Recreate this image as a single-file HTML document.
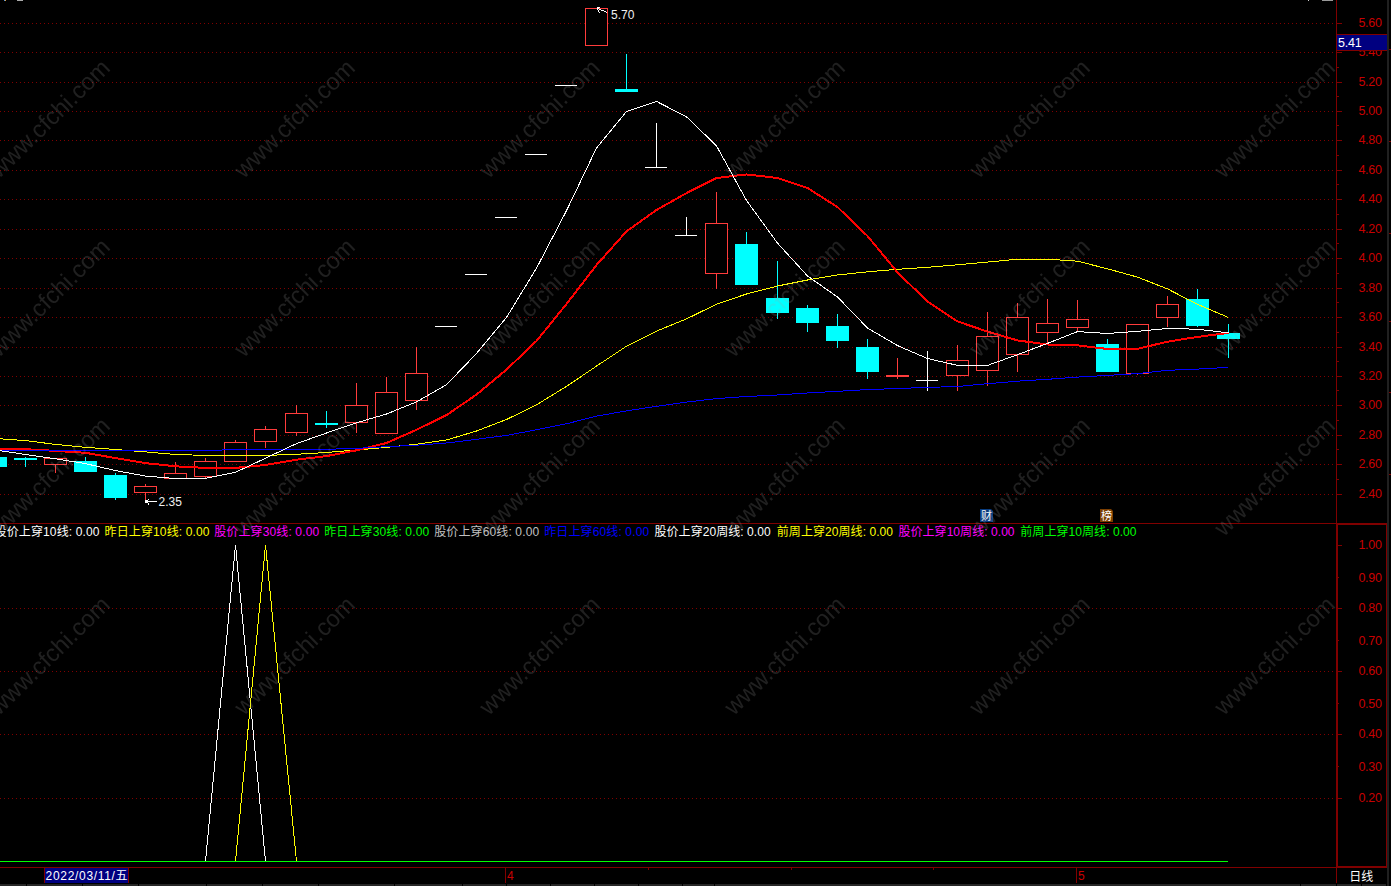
<!DOCTYPE html>
<html lang="zh-CN">
<head>
<meta charset="utf-8">
<title>K线图</title>
<style>
html,body{margin:0;padding:0;background:#000;overflow:hidden;}
#c{position:relative;width:1391px;height:886px;background:#000;overflow:hidden;
font-family:"Liberation Sans","Noto Sans CJK SC",sans-serif;font-size:12px;}
#c svg{position:absolute;left:0;top:0;}
.t{position:absolute;white-space:nowrap;line-height:14px;font-size:12px;}
.bd{position:absolute;top:509px;width:13px;height:13px;color:#fff;font-size:11px;line-height:15.5px;text-align:center;clip-path:polygon(0 0,11px 0,13px 2px,13px 13px,0 13px);}
#wm{pointer-events:none;will-change:transform;}
</style>
</head>
<body>
<div id="c">
<svg width="1391" height="886" viewBox="0 0 1391 886" shape-rendering="crispEdges">
<line x1="0" y1="23.5" x2="1333" y2="23.5" stroke="#800000" stroke-width="1" stroke-dasharray="1 3"/>
<line x1="0" y1="52.5" x2="1333" y2="52.5" stroke="#800000" stroke-width="1" stroke-dasharray="1 3"/>
<line x1="0" y1="82.5" x2="1333" y2="82.5" stroke="#800000" stroke-width="1" stroke-dasharray="1 3"/>
<line x1="0" y1="111.5" x2="1333" y2="111.5" stroke="#800000" stroke-width="1" stroke-dasharray="1 3"/>
<line x1="0" y1="140.5" x2="1333" y2="140.5" stroke="#800000" stroke-width="1" stroke-dasharray="1 3"/>
<line x1="0" y1="170.5" x2="1333" y2="170.5" stroke="#800000" stroke-width="1" stroke-dasharray="1 3"/>
<line x1="0" y1="199.5" x2="1333" y2="199.5" stroke="#800000" stroke-width="1" stroke-dasharray="1 3"/>
<line x1="0" y1="229.5" x2="1333" y2="229.5" stroke="#800000" stroke-width="1" stroke-dasharray="1 3"/>
<line x1="0" y1="258.5" x2="1333" y2="258.5" stroke="#800000" stroke-width="1" stroke-dasharray="1 3"/>
<line x1="0" y1="288.5" x2="1333" y2="288.5" stroke="#800000" stroke-width="1" stroke-dasharray="1 3"/>
<line x1="0" y1="317.5" x2="1333" y2="317.5" stroke="#800000" stroke-width="1" stroke-dasharray="1 3"/>
<line x1="0" y1="347.5" x2="1333" y2="347.5" stroke="#800000" stroke-width="1" stroke-dasharray="1 3"/>
<line x1="0" y1="376.5" x2="1333" y2="376.5" stroke="#800000" stroke-width="1" stroke-dasharray="1 3"/>
<line x1="0" y1="405.5" x2="1333" y2="405.5" stroke="#800000" stroke-width="1" stroke-dasharray="1 3"/>
<line x1="0" y1="435.5" x2="1333" y2="435.5" stroke="#800000" stroke-width="1" stroke-dasharray="1 3"/>
<line x1="0" y1="464.5" x2="1333" y2="464.5" stroke="#800000" stroke-width="1" stroke-dasharray="1 3"/>
<line x1="0" y1="494.5" x2="1333" y2="494.5" stroke="#800000" stroke-width="1" stroke-dasharray="1 3"/>
<line x1="0" y1="608.5" x2="1333" y2="608.5" stroke="#800000" stroke-width="1" stroke-dasharray="1 3"/>
<line x1="0" y1="671.5" x2="1333" y2="671.5" stroke="#800000" stroke-width="1" stroke-dasharray="1 3"/>
<line x1="0" y1="734.5" x2="1333" y2="734.5" stroke="#800000" stroke-width="1" stroke-dasharray="1 3"/>
<line x1="0" y1="798.5" x2="1333" y2="798.5" stroke="#800000" stroke-width="1" stroke-dasharray="1 3"/>

<rect x="-5" y="457" width="1" height="10" fill="#00ffff"/>
<rect x="-16" y="457" width="23" height="10" fill="#00ffff"/>
<rect x="25" y="457" width="1" height="10" fill="#00ffff"/>
<rect x="14" y="458" width="23" height="2" fill="#00ffff"/>
<rect x="55" y="464" width="1" height="9" fill="#ff3c3c"/>
<rect x="44.5" y="458.5" width="22" height="6" fill="#000" stroke="#ff3c3c" stroke-width="1"/>
<rect x="85" y="457" width="1" height="15" fill="#00ffff"/>
<rect x="74" y="461" width="23" height="11" fill="#00ffff"/>
<rect x="115" y="473" width="1" height="27" fill="#00ffff"/>
<rect x="104" y="475" width="23" height="23" fill="#00ffff"/>
<rect x="145" y="484" width="1" height="3" fill="#ff3c3c"/>
<rect x="145" y="492" width="1" height="8" fill="#ff3c3c"/>
<rect x="134.5" y="486.5" width="22" height="6" fill="#000" stroke="#ff3c3c" stroke-width="1"/>
<rect x="175" y="462" width="1" height="12" fill="#ff3c3c"/>
<rect x="164.5" y="473.5" width="22" height="5" fill="#000" stroke="#ff3c3c" stroke-width="1"/>
<rect x="205" y="458" width="1" height="4" fill="#ff3c3c"/>
<rect x="205" y="476" width="1" height="3" fill="#ff3c3c"/>
<rect x="194.5" y="461.5" width="22" height="15" fill="#000" stroke="#ff3c3c" stroke-width="1"/>
<rect x="235" y="440" width="1" height="3" fill="#ff3c3c"/>
<rect x="224.5" y="442.5" width="22" height="19" fill="#000" stroke="#ff3c3c" stroke-width="1"/>
<rect x="265" y="426" width="1" height="4" fill="#ff3c3c"/>
<rect x="265" y="441" width="1" height="7" fill="#ff3c3c"/>
<rect x="254.5" y="429.5" width="22" height="12" fill="#000" stroke="#ff3c3c" stroke-width="1"/>
<rect x="296" y="405" width="1" height="9" fill="#ff3c3c"/>
<rect x="296" y="432" width="1" height="4" fill="#ff3c3c"/>
<rect x="285.5" y="413.5" width="22" height="19" fill="#000" stroke="#ff3c3c" stroke-width="1"/>
<rect x="326" y="411" width="1" height="17" fill="#00ffff"/>
<rect x="315" y="423" width="23" height="2" fill="#00ffff"/>
<rect x="356" y="383" width="1" height="23" fill="#ff3c3c"/>
<rect x="356" y="422" width="1" height="11" fill="#ff3c3c"/>
<rect x="345.5" y="405.5" width="22" height="17" fill="#000" stroke="#ff3c3c" stroke-width="1"/>
<rect x="386" y="377" width="1" height="16" fill="#ff3c3c"/>
<rect x="375.5" y="392.5" width="22" height="41" fill="#000" stroke="#ff3c3c" stroke-width="1"/>
<rect x="416" y="347" width="1" height="27" fill="#ff3c3c"/>
<rect x="416" y="400" width="1" height="10" fill="#ff3c3c"/>
<rect x="405.5" y="373.5" width="22" height="27" fill="#000" stroke="#ff3c3c" stroke-width="1"/>
<rect x="435" y="326" width="22" height="1" fill="#ffffff"/>
<rect x="465" y="274" width="22" height="1" fill="#ffffff"/>
<rect x="495" y="217" width="22" height="1" fill="#ffffff"/>
<rect x="525" y="154" width="22" height="1" fill="#ffffff"/>
<rect x="555" y="85" width="22" height="1" fill="#ffffff"/>
<rect x="585.5" y="8.5" width="22" height="37" fill="#000" stroke="#ff3c3c" stroke-width="1"/>
<rect x="626" y="54" width="1" height="38" fill="#00ffff"/>
<rect x="615" y="89" width="23" height="3" fill="#00ffff"/>
<rect x="656" y="123" width="1" height="45" fill="#ffffff"/>
<rect x="645" y="167" width="22" height="1" fill="#ffffff"/>
<rect x="686" y="217" width="1" height="19" fill="#ffffff"/>
<rect x="675" y="235" width="22" height="1" fill="#ffffff"/>
<rect x="716" y="192" width="1" height="32" fill="#ff3c3c"/>
<rect x="716" y="273" width="1" height="16" fill="#ff3c3c"/>
<rect x="705.5" y="223.5" width="22" height="50" fill="#000" stroke="#ff3c3c" stroke-width="1"/>
<rect x="746" y="232" width="1" height="53" fill="#00ffff"/>
<rect x="735" y="244" width="23" height="41" fill="#00ffff"/>
<rect x="777" y="261" width="1" height="58" fill="#00ffff"/>
<rect x="766" y="298" width="23" height="15" fill="#00ffff"/>
<rect x="807" y="305" width="1" height="27" fill="#00ffff"/>
<rect x="796" y="308" width="23" height="15" fill="#00ffff"/>
<rect x="837" y="314" width="1" height="34" fill="#00ffff"/>
<rect x="826" y="326" width="23" height="15" fill="#00ffff"/>
<rect x="867" y="339" width="1" height="40" fill="#00ffff"/>
<rect x="856" y="347" width="23" height="25" fill="#00ffff"/>
<rect x="897" y="358" width="1" height="21" fill="#ff3c3c"/>
<rect x="886" y="375" width="23" height="2" fill="#ff3c3c"/>
<rect x="927" y="351" width="1" height="40" fill="#ffffff"/>
<rect x="916" y="380" width="22" height="1" fill="#ffffff"/>
<rect x="957" y="345" width="1" height="16" fill="#ff3c3c"/>
<rect x="957" y="375" width="1" height="16" fill="#ff3c3c"/>
<rect x="946.5" y="360.5" width="22" height="15" fill="#000" stroke="#ff3c3c" stroke-width="1"/>
<rect x="987" y="312" width="1" height="25" fill="#ff3c3c"/>
<rect x="987" y="370" width="1" height="16" fill="#ff3c3c"/>
<rect x="976.5" y="336.5" width="22" height="34" fill="#000" stroke="#ff3c3c" stroke-width="1"/>
<rect x="1017" y="303" width="1" height="15" fill="#ff3c3c"/>
<rect x="1017" y="354" width="1" height="18" fill="#ff3c3c"/>
<rect x="1006.5" y="317.5" width="22" height="37" fill="#000" stroke="#ff3c3c" stroke-width="1"/>
<rect x="1047" y="299" width="1" height="25" fill="#ff3c3c"/>
<rect x="1047" y="332" width="1" height="12" fill="#ff3c3c"/>
<rect x="1036.5" y="323.5" width="22" height="9" fill="#000" stroke="#ff3c3c" stroke-width="1"/>
<rect x="1077" y="300" width="1" height="20" fill="#ff3c3c"/>
<rect x="1077" y="327" width="1" height="5" fill="#ff3c3c"/>
<rect x="1066.5" y="319.5" width="22" height="8" fill="#000" stroke="#ff3c3c" stroke-width="1"/>
<rect x="1107" y="339" width="1" height="33" fill="#00ffff"/>
<rect x="1096" y="344" width="23" height="28" fill="#00ffff"/>
<rect x="1137" y="373" width="1" height="2" fill="#ff3c3c"/>
<rect x="1126.5" y="324.5" width="22" height="49" fill="#000" stroke="#ff3c3c" stroke-width="1"/>
<rect x="1167" y="296" width="1" height="9" fill="#ff3c3c"/>
<rect x="1167" y="317" width="1" height="10" fill="#ff3c3c"/>
<rect x="1156.5" y="304.5" width="22" height="13" fill="#000" stroke="#ff3c3c" stroke-width="1"/>
<rect x="1197" y="289" width="1" height="38" fill="#00ffff"/>
<rect x="1186" y="299" width="23" height="27" fill="#00ffff"/>
<rect x="1228" y="324" width="1" height="34" fill="#00ffff"/>
<rect x="1217" y="333" width="23" height="6" fill="#00ffff"/>
<polyline points="-4.5,438.5 25.5,440.6 55.5,444.4 85.5,447.3 115.5,449.5 145.5,451.9 175.5,454.5 205.5,455.4 235.5,455.4 265.5,455.4 296.5,454.3 326.5,452.5 356.5,450 386.5,447.4 416.5,444.2 446.5,440 476.5,431 506.5,419.5 536.5,404.8 566.5,386.4 596.5,366.1 626.5,346.2 656.5,331.1 686.5,318.9 716.5,304.2 746.5,294 777.5,286 807.5,280 837.5,275 867.5,271.8 897.5,269.3 927.5,267.3 957.5,264.8 987.5,262.1 1017.5,259.2 1047.5,259.2 1077.5,261.2 1107.5,268.8 1137.5,277.1 1167.5,288.9 1197.5,304.3 1228.5,317.5" fill="none" stroke="#ffff00" stroke-width="1" stroke-linejoin="round"/>
<polyline points="-4.5,449 25.5,449.2 55.5,450.9 85.5,452.8 115.5,458.1 145.5,463.1 175.5,466.3 205.5,467.9 235.5,467.9 265.5,465 296.5,459.7 326.5,456.1 356.5,450.3 386.5,443 416.5,429.8 446.5,415.1 476.5,394.6 506.5,369.6 536.5,341 566.5,304 596.5,265 626.5,231.4 656.5,210 686.5,193.1 716.5,178 746.5,174.4 777.5,178 807.5,188 837.5,207.1 867.5,236 897.5,272.4 927.5,301.5 957.5,321.4 987.5,331.6 1017.5,340.4 1047.5,344.5 1077.5,345.3 1107.5,349 1137.5,348.8 1167.5,341.7 1197.5,336.9 1228.5,332.9" fill="none" stroke="#ff0000" stroke-width="2" stroke-linejoin="round"/>
<polyline points="-4.5,450.5 25.5,450.5 55.5,450.5 85.5,450.5 115.5,450.5 145.5,450.5 175.5,450.5 205.5,450.5 235.5,449.6 265.5,449.6 296.5,449.5 326.5,449.3 356.5,448.4 386.5,446.7 416.5,445.2 446.5,443 476.5,439.3 506.5,435.4 536.5,429.8 566.5,423.8 596.5,416.1 626.5,410.9 656.5,406.3 686.5,402.1 716.5,398.6 746.5,396.5 777.5,395 807.5,393 837.5,391.3 867.5,389.6 897.5,388.5 927.5,387.4 957.5,386.5 987.5,383.7 1017.5,381.2 1047.5,379.3 1077.5,377.1 1107.5,375.4 1137.5,373.6 1167.5,370.3 1197.5,369.1 1228.5,367.4" fill="none" stroke="#0000ff" stroke-width="1" stroke-linejoin="round"/>
<polyline points="-4.5,450 25.5,454.5 55.5,458.8 85.5,463.6 115.5,470.6 145.5,476.1 175.5,478.5 205.5,478.4 235.5,472.3 265.5,458.2 296.5,443.6 326.5,433 356.5,422.8 386.5,414 416.5,401.9 446.5,384.7 476.5,353.5 506.5,317.4 536.5,268.2 566.5,210.7 596.5,148 626.5,111.5 656.5,101.4 686.5,116.8 716.5,145.8 746.5,200.5 777.5,243.1 807.5,276 837.5,297 867.5,328 897.5,345.6 927.5,358.5 957.5,365.4 987.5,365.4 1017.5,354.7 1047.5,343.4 1077.5,331.6 1107.5,333.5 1137.5,331.3 1167.5,328.5 1197.5,329.2 1228.5,332.9" fill="none" stroke="#ffffff" stroke-width="1" stroke-linejoin="round"/>
<polyline points="205.5,861.5 235.5,545 265.5,861.5" fill="none" stroke="#fff" stroke-width="1"/>
<polyline points="235.5,861.5 265.5,545 296.5,861.5" fill="none" stroke="#ff0" stroke-width="1"/>
<rect x="0" y="861" width="1228" height="1" fill="#00ff00"/>
<line x1="597.5" y1="8.5" x2="607.5" y2="12.5" stroke="#fff" stroke-width="1"/>
<rect x="597" y="7" width="3" height="1" fill="#fff"/>
<rect x="597" y="9" width="1" height="1" fill="#fff"/>
<rect x="598" y="10" width="1" height="1" fill="#fff"/>
<rect x="598" y="11" width="1" height="1" fill="#fff"/>
<rect x="599" y="12" width="1" height="1" fill="#fff"/>
<rect x="145" y="501" width="12" height="1" fill="#fff"/>
<rect x="145" y="500" width="2" height="3" fill="#fff"/>
<rect x="147" y="500" width="1" height="1" fill="#fff"/>
<rect x="148" y="499" width="1" height="1" fill="#fff"/>
<rect x="147" y="502" width="1" height="1" fill="#fff"/>
<rect x="148" y="503" width="1" height="1" fill="#fff"/>
<rect x="148" y="504" width="1" height="1" fill="#fff"/>
<rect x="1336" y="0" width="1" height="524" fill="#800000"/>
<rect x="0" y="523" width="1337" height="1" fill="#800000"/>
<rect x="1336" y="523" width="2" height="345" fill="#800000"/>
<rect x="1336" y="523" width="51" height="2" fill="#800000"/>
<rect x="1386" y="523" width="1" height="345" fill="#800000"/>
<rect x="1336" y="866" width="51" height="2" fill="#800000"/>
<rect x="0" y="867" width="1337" height="1" fill="#800000"/>
<rect x="1336" y="868" width="1" height="15" fill="#800000"/>
<rect x="1387" y="0" width="2" height="886" fill="#202020"/>
<rect x="1337" y="23" width="5" height="1" fill="#800000"/>
<rect x="1337" y="37" width="2" height="1" fill="#800000"/>
<rect x="1337" y="52" width="5" height="1" fill="#800000"/>
<rect x="1337" y="67" width="2" height="1" fill="#800000"/>
<rect x="1337" y="82" width="5" height="1" fill="#800000"/>
<rect x="1337" y="96" width="2" height="1" fill="#800000"/>
<rect x="1337" y="111" width="5" height="1" fill="#800000"/>
<rect x="1337" y="125" width="2" height="1" fill="#800000"/>
<rect x="1337" y="140" width="5" height="1" fill="#800000"/>
<rect x="1337" y="155" width="2" height="1" fill="#800000"/>
<rect x="1337" y="170" width="5" height="1" fill="#800000"/>
<rect x="1337" y="184" width="2" height="1" fill="#800000"/>
<rect x="1337" y="199" width="5" height="1" fill="#800000"/>
<rect x="1337" y="214" width="2" height="1" fill="#800000"/>
<rect x="1337" y="229" width="5" height="1" fill="#800000"/>
<rect x="1337" y="243" width="2" height="1" fill="#800000"/>
<rect x="1337" y="258" width="5" height="1" fill="#800000"/>
<rect x="1337" y="273" width="2" height="1" fill="#800000"/>
<rect x="1337" y="288" width="5" height="1" fill="#800000"/>
<rect x="1337" y="302" width="2" height="1" fill="#800000"/>
<rect x="1337" y="317" width="5" height="1" fill="#800000"/>
<rect x="1337" y="332" width="2" height="1" fill="#800000"/>
<rect x="1337" y="347" width="5" height="1" fill="#800000"/>
<rect x="1337" y="361" width="2" height="1" fill="#800000"/>
<rect x="1337" y="376" width="5" height="1" fill="#800000"/>
<rect x="1337" y="390" width="2" height="1" fill="#800000"/>
<rect x="1337" y="405" width="5" height="1" fill="#800000"/>
<rect x="1337" y="420" width="2" height="1" fill="#800000"/>
<rect x="1337" y="435" width="5" height="1" fill="#800000"/>
<rect x="1337" y="449" width="2" height="1" fill="#800000"/>
<rect x="1337" y="464" width="5" height="1" fill="#800000"/>
<rect x="1337" y="479" width="2" height="1" fill="#800000"/>
<rect x="1337" y="494" width="5" height="1" fill="#800000"/>
<rect x="1338" y="545" width="4" height="1" fill="#800000"/>
<rect x="1338" y="577" width="1" height="1" fill="#800000"/>
<rect x="1338" y="608" width="4" height="1" fill="#800000"/>
<rect x="1338" y="640" width="1" height="1" fill="#800000"/>
<rect x="1338" y="671" width="4" height="1" fill="#800000"/>
<rect x="1338" y="703" width="1" height="1" fill="#800000"/>
<rect x="1338" y="734" width="4" height="1" fill="#800000"/>
<rect x="1338" y="766" width="1" height="1" fill="#800000"/>
<rect x="1338" y="798" width="4" height="1" fill="#800000"/>
<rect x="1389" y="49" width="2" height="1" fill="#800000"/>
<rect x="1389" y="141" width="2" height="1" fill="#800000"/>
<rect x="1389" y="233" width="2" height="1" fill="#800000"/>
<rect x="1389" y="321" width="2" height="1" fill="#800000"/>
<rect x="1389" y="392" width="2" height="1" fill="#800000"/>
<rect x="1389" y="474" width="2" height="1" fill="#800000"/>
<rect x="44" y="868" width="85" height="15" fill="#800000"/>
<rect x="45" y="868" width="83" height="15" fill="#000080"/>
<rect x="505" y="868" width="1" height="15" fill="#800000"/>
<rect x="1076" y="868" width="1" height="15" fill="#800000"/>
<rect x="648" y="868" width="1" height="2" fill="#800000"/>
<rect x="791" y="868" width="1" height="2" fill="#800000"/>
<rect x="933" y="868" width="1" height="2" fill="#800000"/>
<rect x="0" y="884" width="1386" height="2" fill="#262626"/>
<rect x="26" y="884" width="1" height="2" fill="#000"/>
<rect x="82" y="884" width="1" height="2" fill="#000"/>
<rect x="138" y="884" width="1" height="2" fill="#000"/>
<rect x="206" y="884" width="1" height="2" fill="#000"/>
<rect x="262" y="884" width="1" height="2" fill="#000"/>
<rect x="318" y="884" width="1" height="2" fill="#000"/>
<rect x="394" y="884" width="1" height="2" fill="#000"/>
<rect x="462" y="884" width="1" height="2" fill="#000"/>
<rect x="506" y="884" width="1" height="2" fill="#000"/>
<rect x="550" y="884" width="1" height="2" fill="#000"/>
<rect x="594" y="884" width="1" height="2" fill="#000"/>
<rect x="638" y="884" width="1" height="2" fill="#000"/>
<rect x="682" y="884" width="1" height="2" fill="#000"/>
<rect x="714" y="884" width="1" height="2" fill="#000"/>
<rect x="1300" y="884" width="1" height="2" fill="#000"/>
<rect x="1336" y="884" width="1" height="2" fill="#000"/>
<rect x="1361" y="884" width="1" height="2" fill="#000"/>
<rect x="4" y="0" width="2" height="1" fill="#4a90e0"/><rect x="5" y="0" width="1" height="1" fill="#e0a040"/>
<rect x="17" y="0" width="6" height="1" fill="#aaa"/>
<rect x="1308" y="0" width="1" height="1" fill="#ccc"/><rect x="1322" y="0" width="11" height="1" fill="#999"/>
</svg>
<div class="t" style="left:1358.4px;top:16px;color:#c80000;font-size:12.5px;letter-spacing:-0.25px;">5.60</div><div class="t" style="left:1358.4px;top:45px;color:#c80000;font-size:12.5px;letter-spacing:-0.25px;">5.40</div><div class="t" style="left:1358.4px;top:75px;color:#c80000;font-size:12.5px;letter-spacing:-0.25px;">5.20</div><div class="t" style="left:1358.4px;top:104px;color:#c80000;font-size:12.5px;letter-spacing:-0.25px;">5.00</div><div class="t" style="left:1358.4px;top:133px;color:#c80000;font-size:12.5px;letter-spacing:-0.25px;">4.80</div><div class="t" style="left:1358.4px;top:163px;color:#c80000;font-size:12.5px;letter-spacing:-0.25px;">4.60</div><div class="t" style="left:1358.4px;top:192px;color:#c80000;font-size:12.5px;letter-spacing:-0.25px;">4.40</div><div class="t" style="left:1358.4px;top:222px;color:#c80000;font-size:12.5px;letter-spacing:-0.25px;">4.20</div><div class="t" style="left:1358.4px;top:251px;color:#c80000;font-size:12.5px;letter-spacing:-0.25px;">4.00</div><div class="t" style="left:1358.4px;top:281px;color:#c80000;font-size:12.5px;letter-spacing:-0.25px;">3.80</div><div class="t" style="left:1358.4px;top:310px;color:#c80000;font-size:12.5px;letter-spacing:-0.25px;">3.60</div><div class="t" style="left:1358.4px;top:340px;color:#c80000;font-size:12.5px;letter-spacing:-0.25px;">3.40</div><div class="t" style="left:1358.4px;top:369px;color:#c80000;font-size:12.5px;letter-spacing:-0.25px;">3.20</div><div class="t" style="left:1358.4px;top:398px;color:#c80000;font-size:12.5px;letter-spacing:-0.25px;">3.00</div><div class="t" style="left:1358.4px;top:428px;color:#c80000;font-size:12.5px;letter-spacing:-0.25px;">2.80</div><div class="t" style="left:1358.4px;top:457px;color:#c80000;font-size:12.5px;letter-spacing:-0.25px;">2.60</div><div class="t" style="left:1358.4px;top:487px;color:#c80000;font-size:12.5px;letter-spacing:-0.25px;">2.40</div><div class="t" style="left:1358.4px;top:538px;color:#c80000;font-size:12.5px;letter-spacing:-0.25px;">1.00</div><div class="t" style="left:1358.4px;top:571px;color:#c80000;font-size:12.5px;letter-spacing:-0.25px;">0.90</div><div class="t" style="left:1358.4px;top:601px;color:#c80000;font-size:12.5px;letter-spacing:-0.25px;">0.80</div><div class="t" style="left:1358.4px;top:634px;color:#c80000;font-size:12.5px;letter-spacing:-0.25px;">0.70</div><div class="t" style="left:1358.4px;top:664px;color:#c80000;font-size:12.5px;letter-spacing:-0.25px;">0.60</div><div class="t" style="left:1358.4px;top:697px;color:#c80000;font-size:12.5px;letter-spacing:-0.25px;">0.50</div><div class="t" style="left:1358.4px;top:727px;color:#c80000;font-size:12.5px;letter-spacing:-0.25px;">0.40</div><div class="t" style="left:1358.4px;top:760px;color:#c80000;font-size:12.5px;letter-spacing:-0.25px;">0.30</div><div class="t" style="left:1358.4px;top:791px;color:#c80000;font-size:12.5px;letter-spacing:-0.25px;">0.20</div><div class="t" style="left:-5.5px;top:524px;color:#ffffff;line-height:16px;letter-spacing:0.13px;">股价上穿10线: 0.00</div><div class="t" style="left:104.5px;top:524px;color:#ffff00;line-height:16px;letter-spacing:0.13px;">昨日上穿10线: 0.00</div><div class="t" style="left:214.2px;top:524px;color:#ff00ff;line-height:16px;letter-spacing:0.13px;">股价上穿30线: 0.00</div><div class="t" style="left:324.2px;top:524px;color:#00ff00;line-height:16px;letter-spacing:0.13px;">昨日上穿30线: 0.00</div><div class="t" style="left:434.2px;top:524px;color:#c0c0c0;line-height:16px;letter-spacing:0.13px;">股价上穿60线: 0.00</div><div class="t" style="left:544.2px;top:524px;color:#0000ff;line-height:16px;letter-spacing:0.13px;">昨日上穿60线: 0.00</div><div class="t" style="left:654.5px;top:524px;color:#ffffff;line-height:16px;letter-spacing:0.06px;">股价上穿20周线: 0.00</div><div class="t" style="left:776.8px;top:524px;color:#ffff00;line-height:16px;letter-spacing:0.06px;">前周上穿20周线: 0.00</div><div class="t" style="left:898.4px;top:524px;color:#ff00ff;line-height:16px;letter-spacing:0.06px;">股价上穿10周线: 0.00</div><div class="t" style="left:1020.3px;top:524px;color:#00ff00;line-height:16px;letter-spacing:0.06px;">前周上穿10周线: 0.00</div><div class="t" style="left:611px;top:8px;color:#f0f0f0;">5.70</div><div class="t" style="left:158.5px;top:495px;color:#f0f0f0;">2.35</div><div style="position:absolute;left:1337px;top:34px;width:50px;height:15px;background:#000080;border-top:1px solid #800000;border-bottom:1px solid #800000;"></div><div class="t" style="left:1338px;top:35.5px;color:#ffffff;font-size:12.5px;letter-spacing:-0.25px;">5.41</div><div class="t" style="left:45.6px;top:868.5px;color:#ffffff;line-height:15px;letter-spacing:0.68px;">2022/03/11/五</div><div class="t" style="left:507px;top:869px;color:#c80000;">4</div><div class="t" style="left:1078px;top:869px;color:#c80000;">5</div><div class="t" style="left:1349.3px;top:869.5px;color:#ffffff;line-height:15px;">日线</div><div class="bd" style="left:980px;background:#083c80;">财</div><div class="bd" style="left:1100px;background:#7c3e00;">榜</div>
<svg id="wm" width="1391" height="886" viewBox="0 0 1391 886"><g font-family="Liberation Sans, sans-serif" font-size="23.8" fill="rgba(160,160,160,0.2)" shape-rendering="auto" text-rendering="geometricPrecision"><text transform="translate(35.80000000000001 143.3) rotate(-44.3)" x="-51.6" y="0">www.cfchi.com</text><text transform="translate(280.8 143.3) rotate(-44.3)" x="-51.6" y="0">www.cfchi.com</text><text transform="translate(525.8 143.3) rotate(-44.3)" x="-51.6" y="0">www.cfchi.com</text><text transform="translate(770.8 143.3) rotate(-44.3)" x="-51.6" y="0">www.cfchi.com</text><text transform="translate(1015.8 143.3) rotate(-44.3)" x="-51.6" y="0">www.cfchi.com</text><text transform="translate(1260.8 143.3) rotate(-44.3)" x="-51.6" y="0">www.cfchi.com</text><text transform="translate(1505.8 143.3) rotate(-44.3)" x="-51.6" y="0">www.cfchi.com</text><text transform="translate(35.80000000000001 322.3) rotate(-44.3)" x="-51.6" y="0">www.cfchi.com</text><text transform="translate(280.8 322.3) rotate(-44.3)" x="-51.6" y="0">www.cfchi.com</text><text transform="translate(525.8 322.3) rotate(-44.3)" x="-51.6" y="0">www.cfchi.com</text><text transform="translate(770.8 322.3) rotate(-44.3)" x="-51.6" y="0">www.cfchi.com</text><text transform="translate(1015.8 322.3) rotate(-44.3)" x="-51.6" y="0">www.cfchi.com</text><text transform="translate(1260.8 322.3) rotate(-44.3)" x="-51.6" y="0">www.cfchi.com</text><text transform="translate(1505.8 322.3) rotate(-44.3)" x="-51.6" y="0">www.cfchi.com</text><text transform="translate(35.80000000000001 501.3) rotate(-44.3)" x="-51.6" y="0">www.cfchi.com</text><text transform="translate(280.8 501.3) rotate(-44.3)" x="-51.6" y="0">www.cfchi.com</text><text transform="translate(525.8 501.3) rotate(-44.3)" x="-51.6" y="0">www.cfchi.com</text><text transform="translate(770.8 501.3) rotate(-44.3)" x="-51.6" y="0">www.cfchi.com</text><text transform="translate(1015.8 501.3) rotate(-44.3)" x="-51.6" y="0">www.cfchi.com</text><text transform="translate(1260.8 501.3) rotate(-44.3)" x="-51.6" y="0">www.cfchi.com</text><text transform="translate(1505.8 501.3) rotate(-44.3)" x="-51.6" y="0">www.cfchi.com</text><text transform="translate(35.80000000000001 680.3) rotate(-44.3)" x="-51.6" y="0">www.cfchi.com</text><text transform="translate(280.8 680.3) rotate(-44.3)" x="-51.6" y="0">www.cfchi.com</text><text transform="translate(525.8 680.3) rotate(-44.3)" x="-51.6" y="0">www.cfchi.com</text><text transform="translate(770.8 680.3) rotate(-44.3)" x="-51.6" y="0">www.cfchi.com</text><text transform="translate(1015.8 680.3) rotate(-44.3)" x="-51.6" y="0">www.cfchi.com</text><text transform="translate(1260.8 680.3) rotate(-44.3)" x="-51.6" y="0">www.cfchi.com</text><text transform="translate(1505.8 680.3) rotate(-44.3)" x="-51.6" y="0">www.cfchi.com</text></g></svg>
</div>
</body>
</html>
